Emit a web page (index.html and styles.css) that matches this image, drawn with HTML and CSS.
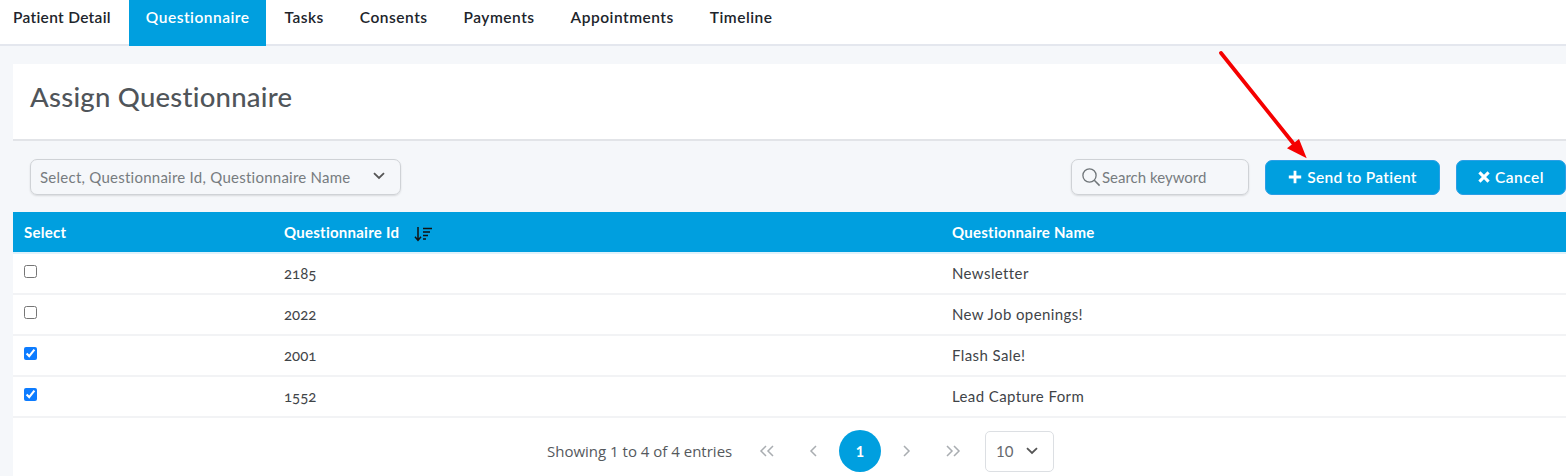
FILE: index.html
```html
<!DOCTYPE html>
<html lang="en">
<head>
    <meta charset="UTF-8">
    <meta name="viewport" content="width=device-width, initial-scale=1.0">
    <title>Assign Questionnaire</title>
    <link rel="stylesheet" href="styles.css">
</head>
<body>
    <nav class="tabs">
        <a class="tab">Patient Detail</a>
        <a class="tab active">Questionnaire</a>
        <a class="tab">Tasks</a>
        <a class="tab">Consents</a>
        <a class="tab">Payments</a>
        <a class="tab">Appointments</a>
        <a class="tab">Timeline</a>
    </nav>

    <main class="content">
        <div class="title-bar">
            <h1>Assign Questionnaire</h1>
        </div>

        <div class="toolbar">
            <div class="select-box">
                <span>Select, Questionnaire Id, Questionnaire Name</span>
                <svg class="chevron" width="12" height="8" viewBox="0 0 12 8"><path d="M1 1.2 6 6l5-4.8" fill="none" stroke="#555" stroke-width="1.8"/></svg>
            </div>
            <div class="toolbar-right">
                <div class="search-box">
                    <svg width="20" height="20" viewBox="0 0 20 20"><circle cx="8.5" cy="8.5" r="6.6" fill="none" stroke="#6f7579" stroke-width="1.3"/><path d="M13.3 13.3 18.6 18.6" stroke="#6f7579" stroke-width="1.5"/></svg>
                    <span>Search keyword</span>
                </div>
                <button class="btn btn-send">
                    <svg width="14" height="14" viewBox="0 0 14 14"><path d="M7 .8v12.4M.8 7h12.4" stroke="#fff" stroke-width="2.8"/></svg>
                    Send to Patient
                </button>
                <button class="btn btn-cancel">
                    <svg width="12" height="12" viewBox="0 0 11 11"><path d="M1.3 1.3l8.4 8.4M9.7 1.3l-8.4 8.4" stroke="#fff" stroke-width="2.8"/></svg>
                    Cancel
                </button>
            </div>
        </div>

        <table class="grid">
            <thead>
                <tr>
                    <th class="col-select">Select</th>
                    <th class="col-id">
                        Questionnaire Id
                        <svg class="sort-icon" width="19" height="16" viewBox="0 0 19 16"><path d="M4 1v13M1 10.8 4 14.4 7 10.8" fill="none" stroke="#111" stroke-width="1.5"/><path d="M9 2.5h9M9 6h7M9 9.5h5M9 13h3" stroke="#111" stroke-width="1.4"/></svg>
                    </th>
                    <th>Questionnaire Name</th>
                </tr>
            </thead>
            <tbody>
                <tr>
                    <td><input type="checkbox"></td>
                    <td class="num">2185</td>
                    <td>Newsletter</td>
                </tr>
                <tr>
                    <td><input type="checkbox"></td>
                    <td class="num">2022</td>
                    <td>New Job openings!</td>
                </tr>
                <tr>
                    <td><input type="checkbox" checked></td>
                    <td class="num">2001</td>
                    <td>Flash Sale!</td>
                </tr>
                <tr>
                    <td><input type="checkbox" checked></td>
                    <td class="num">1552</td>
                    <td>Lead Capture Form</td>
                </tr>
            </tbody>
        </table>

        <div class="pager">
            <span class="pager-info">Showing 1 to 4 of 4 entries</span>
            <svg class="pager-icon" width="16" height="12" viewBox="0 0 16 12"><path d="M7 1 2 6l5 5M14 1 9 6l5 5" fill="none" stroke="#a9adb1" stroke-width="1.5"/></svg>
            <svg class="pager-icon" width="9" height="12" viewBox="0 0 9 12"><path d="M7 1 2 6l5 5" fill="none" stroke="#a9adb1" stroke-width="1.5"/></svg>
            <span class="page-current">1</span>
            <svg class="pager-icon" width="9" height="12" viewBox="0 0 9 12"><path d="M2 1l5 5-5 5" fill="none" stroke="#a9adb1" stroke-width="1.5"/></svg>
            <svg class="pager-icon" width="16" height="12" viewBox="0 0 16 12"><path d="M2 1l5 5-5 5M9 1l5 5-5 5" fill="none" stroke="#a9adb1" stroke-width="1.5"/></svg>
            <div class="page-size">
                <span>10</span>
                <svg width="12" height="8" viewBox="0 0 12 8"><path d="M1 1.2 6 6l5-4.8" fill="none" stroke="#555" stroke-width="1.8"/></svg>
            </div>
        </div>
    </main>

    <svg class="callout" width="100" height="120" viewBox="0 0 100 120">
        <path d="M2 2 74 92" stroke="#f50000" stroke-width="3.8" stroke-linecap="round" fill="none"/>
        <path d="M87.7 107.3 68 97.3 80 88Z" fill="#f50000"/>
    </svg>
</body>
</html>
```

FILE: styles.css
```css
html, body {
    height: 476px;
    overflow: hidden;
}
body {
    margin: 0;
    position: relative;
    background: #f5f7fa;
    font-family: "Lato", "Open Sans", sans-serif;
    color: #3f4448;
}
.tabs {
    display: flex;
    height: 44px;
    padding-left: 1px;
    background: #fff;
    border-bottom: 2px solid #e4e7ee;
}
.tab {
    padding: 8px 18px 0;
    font-size: 15.5px;
    font-weight: 600;
    letter-spacing: 0.5px;
    color: #20242b;
}
.tab:first-child {
    padding-left: 12px;
    letter-spacing: 0.3px;
}
.tab.active {
    height: 46px;
    box-sizing: border-box;
    margin-bottom: -2px;
    padding: 8px 17px 0;
    background: #009fdf;
    color: #fff;
}
.content {
    margin: 18px 0 0 13px;
}
.title-bar {
    height: 75px;
    background: #fff;
    border-bottom: 2px solid #e2e4e8;
    display: flex;
    align-items: center;
    padding-left: 17px;
}
h1 {
    margin: 0 0 10px;
    font-size: 27.5px;
    font-weight: 500;
    letter-spacing: 0.25px;
    color: #50555a;
}
.toolbar {
    height: 71px;
    display: flex;
    align-items: center;
    justify-content: space-between;
    padding: 1px 0 0 17px;
    box-sizing: border-box;
}
.select-box {
    width: 371px;
    height: 36px;
    box-sizing: border-box;
    display: flex;
    align-items: center;
    justify-content: space-between;
    padding: 0 15px 0 9px;
    border: 1px solid #cfd2d6;
    border-radius: 7px;
    box-shadow: 0 1px 2px rgba(0, 0, 0, 0.12);
    font-size: 15px;
    letter-spacing: 0.25px;
    color: #777c80;
}
.chevron {
    margin-bottom: 3px;
}
.toolbar-right {
    display: flex;
    align-items: center;
    gap: 16px;
}
.search-box {
    width: 178px;
    height: 36px;
    box-sizing: border-box;
    display: flex;
    align-items: center;
    gap: 1px;
    padding-left: 9px;
    border: 1px solid #cfd2d6;
    border-radius: 7px;
    box-shadow: 0 1px 2px rgba(0, 0, 0, 0.12);
    font-size: 15px;
    color: #777c80;
}
.btn {
    height: 35px;
    display: flex;
    align-items: center;
    justify-content: center;
    gap: 5px;
    border: 1px solid #2b9fe6;
    border-radius: 7px;
    background: #009fdf;
    color: #fff;
    font-family: inherit;
    font-size: 15.5px;
    font-weight: 600;
}
.btn-send {
    width: 175px;
    letter-spacing: 0.3px;
}
.btn-cancel {
    width: 110px;
    letter-spacing: 0.5px;
}
.grid {
    width: 100%;
    border-collapse: collapse;
    table-layout: fixed;
    background: #fff;
    font-size: 15px;
    letter-spacing: 0.4px;
}
.grid th {
    height: 40px;
    padding: 0 0 0 11px;
    background: #009fdf;
    border-bottom: 2px solid #dff2fb;
    color: #fff;
    text-align: left;
    font-weight: 700;
    font-size: 15px;
    letter-spacing: 0.25px;
}
.col-select {
    width: 249px;
}
.col-id {
    width: 657px;
}
.sort-icon {
    vertical-align: -4px;
    margin-left: 11px;
}
.grid td {
    height: 38px;
    padding: 0 0 1px 11px;
    border-bottom: 2px solid #f2f3f5;
    color: #3f4448;
    box-sizing: content-box;
}
.grid td.num {
    letter-spacing: 0;
    font-variant-numeric: oldstyle-nums;
}
.grid td input {
    display: block;
    width: 13px;
    height: 13px;
    margin: 0 0 4px;
    accent-color: #0d7cff;
}
.pager {
    height: 66px;
    background: #fff;
    display: flex;
    align-items: center;
    padding: 0 0 0 534px;
    font-size: 14.5px;
}
.pager-info {
    width: 212px;
    font-family: "Open Sans", sans-serif;
    font-size: 15px;
    color: #55595d;
}
.pager-icon {
    flex: none;
}
.pager-icon:nth-of-type(2) {
    margin-left: 34px;
}
.page-current {
    width: 42px;
    height: 42px;
    margin: 0 21px;
    border-radius: 50%;
    background: #009fdf;
    color: #fff;
    font-weight: 700;
    display: flex;
    align-items: center;
    justify-content: center;
}
.pager-icon:nth-of-type(4) {
    margin-left: 34px;
}
.page-size {
    width: 69px;
    height: 41px;
    margin-left: 24px;
    box-sizing: border-box;
    display: flex;
    align-items: center;
    justify-content: space-between;
    padding: 0 15px 0 10px;
    border: 1px solid #dcdfe3;
    border-radius: 5px;
    font-size: 15px;
    color: #66696d;
}
.callout {
    position: absolute;
    left: 1219px;
    top: 51px;
}
```
